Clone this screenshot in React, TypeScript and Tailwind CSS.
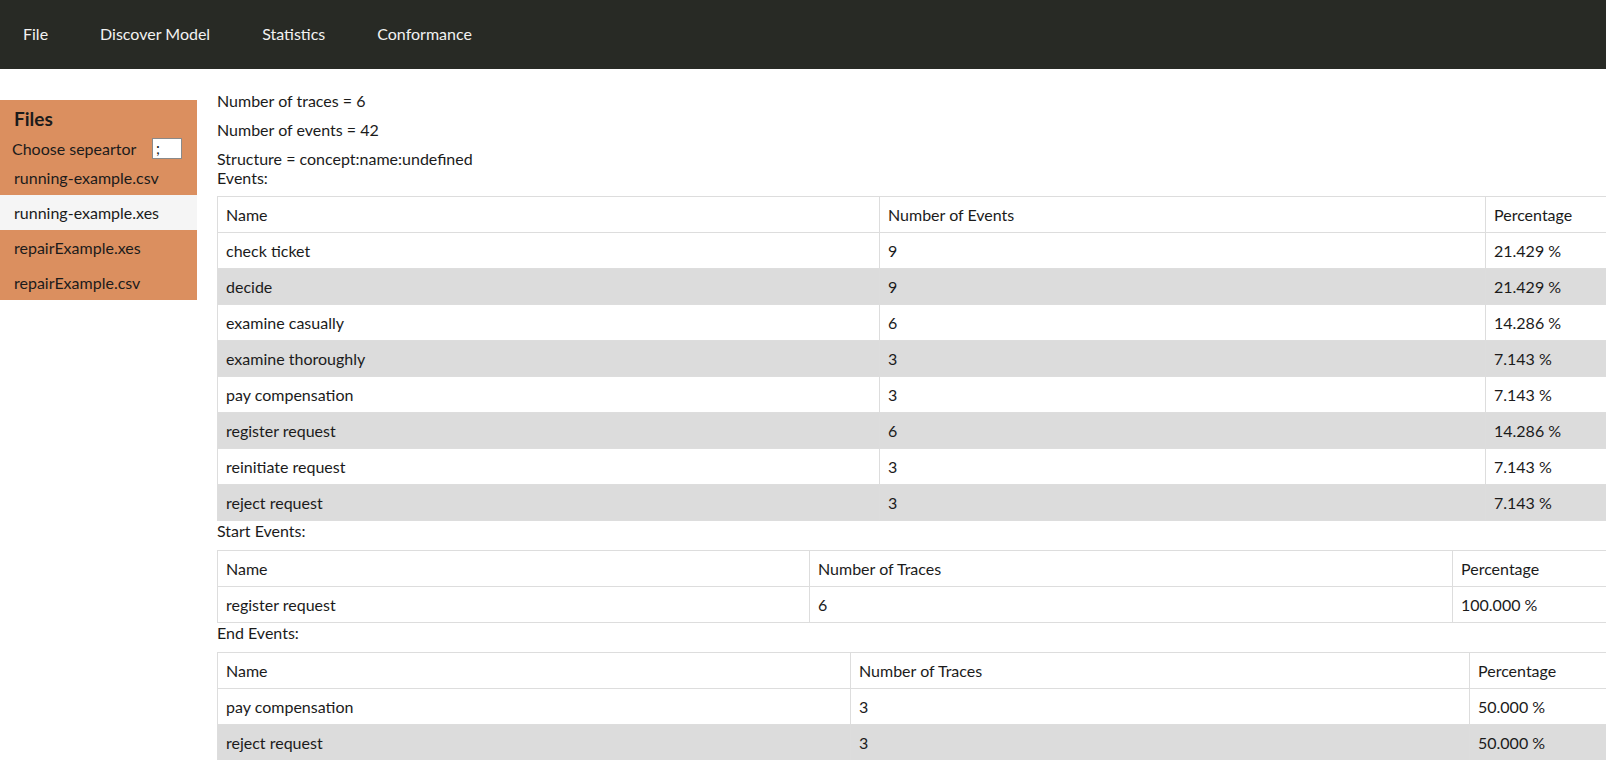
import React from "react";

type Row = { name: string; count: number; pct: string };

const events: Row[] = [
    { name: "check ticket", count: 9, pct: "21.429 %" },
    { name: "decide", count: 9, pct: "21.429 %" },
    { name: "examine casually", count: 6, pct: "14.286 %" },
    { name: "examine thoroughly", count: 3, pct: "7.143 %" },
    { name: "pay compensation", count: 3, pct: "7.143 %" },
    { name: "register request", count: 6, pct: "14.286 %" },
    { name: "reinitiate request", count: 3, pct: "7.143 %" },
    { name: "reject request", count: 3, pct: "7.143 %" },
];

const startEvents: Row[] = [{ name: "register request", count: 6, pct: "100.000 %" }];

const endEvents: Row[] = [
    { name: "pay compensation", count: 3, pct: "50.000 %" },
    { name: "reject request", count: 3, pct: "50.000 %" },
];

const files = ["running-example.csv", "running-example.xes", "repairExample.xes", "repairExample.csv"];

function StatsTable({ rows, countLabel, cols }: { rows: Row[]; countLabel: string; cols: [number, number] }) {
    const cell = "border border-[#dddddd] px-[8px] py-[8px] leading-[19px] text-left font-normal";
    return (
        <table className="mt-[9px] w-[1500px] table-fixed border-collapse border border-[#dddddd]">
            <colgroup>
                <col style={{ width: cols[0] }} />
                <col style={{ width: cols[1] }} />
                <col />
            </colgroup>
            <thead>
                <tr className="bg-white">
                    <th className={cell}>Name</th>
                    <th className={cell}>{countLabel}</th>
                    <th className={cell}>Percentage</th>
                </tr>
            </thead>
            <tbody>
                {rows.map((r, i) => (
                    <tr key={r.name} className={i % 2 === 1 ? "bg-[#dcdcdc]" : "bg-white"}>
                        <td className={cell}>{r.name}</td>
                        <td className={cell}>{r.count}</td>
                        <td className={cell}>{r.pct}</td>
                    </tr>
                ))}
            </tbody>
        </table>
    );
}

export default function App() {
    return (
        <div className="h-[760px] w-full overflow-hidden bg-white text-[16px] text-[#1b1b1b] font-['Lato','Liberation_Sans',sans-serif]">
            {/* Top navigation */}
            <nav className="flex h-[69px] items-center gap-[52px] bg-[#282a25] pb-[1px] pl-[23px] text-[#f2f2f2]">
                <span>File</span>
                <span>Discover Model</span>
                <span>Statistics</span>
                <span>Conformance</span>
            </nav>

            <div className="flex">
                {/* Files sidebar */}
                <aside className="mt-[31px] w-[197px] shrink-0 self-start bg-[#db8f5f]">
                    <h2 className="pl-[14px] pt-[7px] text-[19px] font-bold leading-[24px]">Files</h2>
                    <div className="mt-[7px] flex h-[21px] items-center pl-[12px]">
                        <span className="w-[140px]">Choose sepeartor</span>
                        <input
                            defaultValue=";"
                            className="h-[21px] w-[30px] border border-[#8a8a8a] bg-white px-[3px] text-[15px] outline-none"
                        />
                    </div>
                    <ul className="mt-[1px]">
                        {files.map((f, i) => (
                            <li key={f} className={`h-[35px] pl-[14px] leading-[35px] ${i === 1 ? "bg-[#f5f5f5]" : ""}`}>
                                {f}
                            </li>
                        ))}
                    </ul>
                </aside>

                {/* Statistics */}
                <main className="ml-[20px] pt-[22px]">
                    <p className="leading-[20px]">Number of traces = 6</p>
                    <p className="mt-[9px] leading-[20px]">Number of events = 42</p>
                    <p className="mt-[9px] leading-[19px]">Structure = concept:name:undefined</p>
                    <p className="leading-[19px]">Events:</p>
                    <StatsTable rows={events} countLabel="Number of Events" cols={[662, 606]} />

                    <p className="leading-[20px]">Start Events:</p>
                    <StatsTable rows={startEvents} countLabel="Number of Traces" cols={[592, 643]} />

                    <p className="leading-[20px]">End Events:</p>
                    <StatsTable rows={endEvents} countLabel="Number of Traces" cols={[633, 619]} />
                </main>
            </div>
        </div>
    );
}
